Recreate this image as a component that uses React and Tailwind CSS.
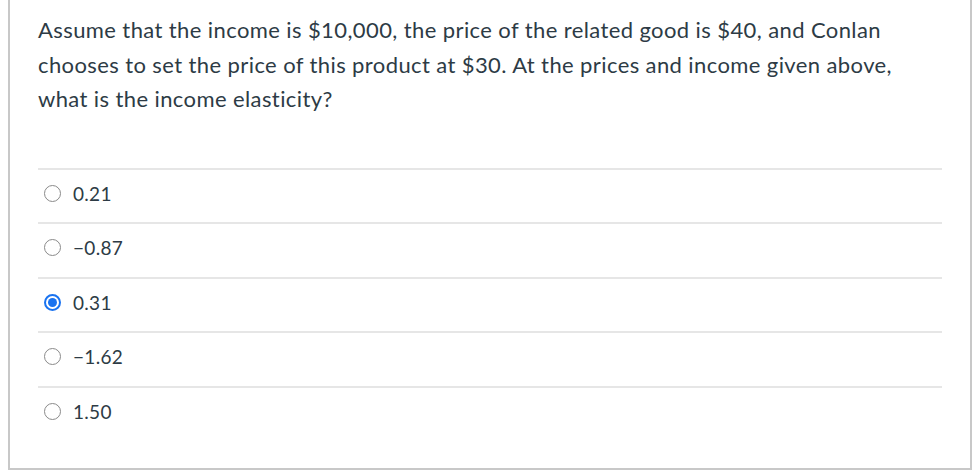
import { useState } from "react";

const answers = ["0.21", "-0.87", "0.31", "-1.62", "1.50"];

function Radio({ checked }) {
  if (checked) {
    return (
      <span className="w-[17px] h-[17px] rounded-full border-[2px] border-[#1a73f0] flex items-center justify-center shrink-0">
        <span className="w-[9px] h-[9px] rounded-full bg-[#1a73f0]" />
      </span>
    );
  }
  return <span className="w-[17px] h-[17px] rounded-full border-[1.5px] border-[#8a8a8a] bg-white shrink-0" />;
}

export default function App() {
  const [picked, setPicked] = useState(2);

  return (
    <div className="w-[975px] h-[475px] bg-white" style={{ fontFamily: "Lato, 'Open Sans', sans-serif" }}>
      <div className="ml-[8px] w-[964px] h-[470px] border-x-2 border-b-2 border-[#c8c8c8] pl-[28px] pr-[28px] pt-[13px] text-[#2d3b45]">
        <p className="text-[22px] leading-[34.5px] tracking-[0.4px] whitespace-nowrap">
          Assume that the income is $10,000, the price of the related good is $40, and Conlan
          <br />
          chooses to set the price of this product at $30. At the prices and income given above,
          <br />
          what is the income elasticity?
        </p>
        <div className="mt-[51px]">
          {answers.map((a, i) => (
            <label
              key={a}
              onClick={() => setPicked(i)}
              className="h-[54.5px] border-t-2 border-[#e6e6e6] flex items-center pb-[5px] pl-[6px] gap-[12px] cursor-pointer"
            >
              <Radio checked={picked === i} />
              <span className="text-[19px] leading-none tracking-[0.3px]">{a.replace("-", "\u2212")}</span>
            </label>
          ))}
        </div>
      </div>
    </div>
  );
}
